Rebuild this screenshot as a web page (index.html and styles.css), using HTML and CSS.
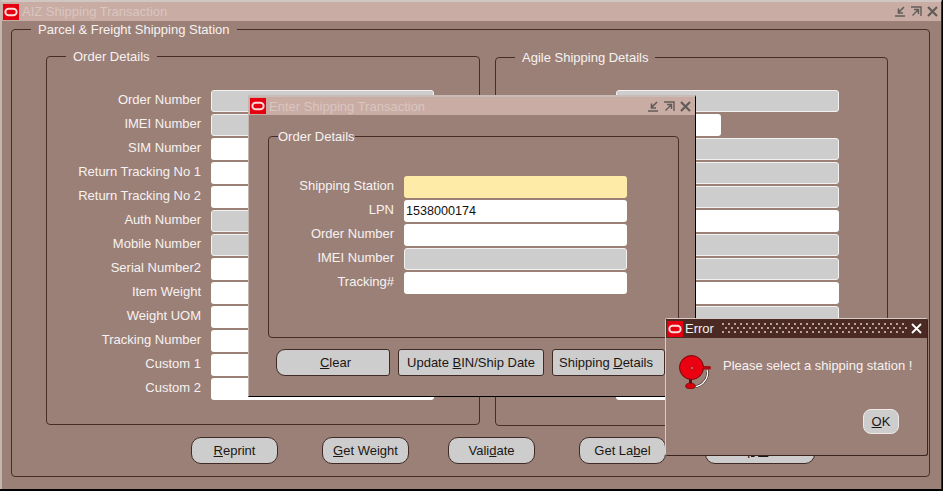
FILE: index.html
```html
<!DOCTYPE html>
<html lang="en">
<head>
<meta charset="utf-8">
<title>AIZ Shipping Transaction</title>
<link rel="stylesheet" href="styles.css">
</head>
<body>
<div class="desktop">

  <section class="window main-window">
    <header class="titlebar">
      <svg class="logo" viewBox="0 0 17 17"><rect width="17" height="17" fill="#e6000f"/><rect x="2.5" y="5" width="12" height="7" rx="3.5" fill="none" stroke="#fbdcdc" stroke-width="2"/></svg>
      <span class="title-text">AIZ Shipping Transaction</span>
      <span class="controls">
        <svg class="ctl" viewBox="0 0 11 11"><path d="M0 10H10M9 1L3.5 6.5M3.5 2.5V7H8" fill="none" stroke="#625c59" stroke-width="1.6"/></svg>
        <svg class="ctl" viewBox="0 0 11 11"><path d="M0 1H10V10M1.5 9.5L7.5 3.5M3 3.5H7.5V8" fill="none" stroke="#625c59" stroke-width="1.4"/></svg>
        <svg class="ctl" viewBox="0 0 11 11"><path d="M1 1L10 10M10 1L1 10" fill="none" stroke="#625c59" stroke-width="2.2"/></svg>
      </span>
    </header>
    <fieldset class="group outer-group">
      <legend>Parcel &amp; Freight Shipping Station</legend>
      <div class="columns">
        <fieldset class="group left-group">
          <legend>Order Details</legend>
          <div class="form left-form">
            <label>Order Number</label><div class="field ro"></div>
            <label>IMEI Number</label><div class="field ro"></div>
            <label>SIM Number</label><div class="field"></div>
            <label>Return Tracking No 1</label><div class="field"></div>
            <label>Return Tracking No 2</label><div class="field"></div>
            <label>Auth Number</label><div class="field ro"></div>
            <label>Mobile Number</label><div class="field ro"></div>
            <label>Serial Number2</label><div class="field"></div>
            <label>Item Weight</label><div class="field"></div>
            <label>Weight UOM</label><div class="field"></div>
            <label>Tracking Number</label><div class="field"></div>
            <label>Custom 1</label><div class="field"></div>
            <label>Custom 2</label><div class="field"></div>
          </div>
        </fieldset>
        <fieldset class="group right-group">
          <legend>Agile Shipping Details</legend>
          <div class="right-form">
            <div class="field ro"></div>
            <div class="field short"></div>
            <div class="field ro"></div>
            <div class="field ro"></div>
            <div class="field ro"></div>
            <div class="field"></div>
            <div class="field ro"></div>
            <div class="field ro"></div>
            <div class="field"></div>
            <div class="field ro"></div>
            <div class="field ro"></div>
            <div class="field ro"></div>
            <div class="field"></div>
          </div>
        </fieldset>
      </div>
      <div class="main-buttons">
        <button class="btn pill w87"><u>R</u>eprint</button>
        <button class="btn pill w87 tight"><u>G</u>et Weight</button>
        <button class="btn pill w87">Vali<u>d</u>ate</button>
        <button class="btn pill w87 tight">Get La<u>b</u>el</button>
        <button class="btn pill w110">Shi<u>p</u> <u>O</u>rder</button>
      </div>
    </fieldset>
  </section>

  <section class="window dialog">
    <header class="titlebar">
      <svg class="logo" viewBox="0 0 17 17"><rect width="17" height="17" fill="#e6000f"/><rect x="2.5" y="5" width="12" height="7" rx="3.5" fill="none" stroke="#fbdcdc" stroke-width="2"/></svg>
      <span class="title-text">Enter Shipping Transaction</span>
      <span class="controls dialog-controls">
        <svg class="ctl" viewBox="0 0 11 11"><path d="M0 10H10M9 1L3.5 6.5M3.5 2.5V7H8" fill="none" stroke="#625c59" stroke-width="1.6"/></svg>
        <svg class="ctl" viewBox="0 0 11 11"><path d="M0 1H10V10M1.5 9.5L7.5 3.5M3 3.5H7.5V8" fill="none" stroke="#625c59" stroke-width="1.4"/></svg>
        <svg class="ctl" viewBox="0 0 11 11"><path d="M1 1L10 10M10 1L1 10" fill="none" stroke="#625c59" stroke-width="2.2"/></svg>
      </span>
    </header>
    <fieldset class="group dialog-group">
      <legend>Order Details</legend>
      <div class="form dialog-form">
        <label>Shipping Station</label><div class="field required"></div>
        <label>LPN</label><div class="field">1538000174</div>
        <label>Order Number</label><div class="field"></div>
        <label>IMEI Number</label><div class="field ro"></div>
        <label>Tracking#</label><div class="field"></div>
      </div>
    </fieldset>
    <div class="dialog-buttons">
      <button class="btn half-round clear"><u>C</u>lear</button>
      <button class="btn square update">Update <u>B</u>IN/Ship Date</button>
      <button class="btn square details">Shipping <u>D</u>etails</button>
    </div>
  </section>

  <section class="window error">
    <header class="error-bar">
      <svg class="logo" viewBox="0 0 17 17"><rect width="17" height="17" fill="#e6000f"/><rect x="2.5" y="5" width="12" height="7" rx="3.5" fill="none" stroke="#fbdcdc" stroke-width="2"/></svg>
      <span class="error-title">Error</span>
      <span class="dots"></span>
      <svg class="error-close" viewBox="0 0 11 11"><path d="M1 1L10 10M10 1L1 10" fill="none" stroke="#fff" stroke-width="1.8"/></svg>
    </header>
    <div class="error-body">
      <svg class="bell" viewBox="0 0 34 34">
        <path d="M28 15C30 21 26 31 14 32" fill="none" stroke="#3a2420" stroke-width="2.6"/>
        <path d="M28 15C30 21 26 31 14 32" fill="none" stroke="#fff" stroke-width="1.4"/>
        <path d="M11.500 23V29" stroke="#6b0a0a" stroke-width="3"/>
        <rect x="23" y="11" width="9" height="3.500" rx="1.500" fill="#a80f12"/>
        <ellipse cx="11.500" cy="31" rx="5" ry="3" fill="#d9000c" stroke="#5a0c0c" stroke-width=".7"/>
        <circle cx="12.500" cy="12.500" r="12" fill="#ea0010" stroke="#700a0c" stroke-width="1"/>
        <circle cx="13" cy="13" r="1.300" fill="#f7a090" stroke="#8a0a0c" stroke-width=".7"/>
      </svg>
      <p class="error-msg">Please select a shipping station !</p>
    </div>
    <div class="error-actions">
      <button class="btn ok"><u>O</u>K</button>
    </div>
  </section>

</div>
</body>
</html>
```

FILE: styles.css
```css
* { box-sizing: border-box; }

html, body {
  margin: 0;
  padding: 0;
  background: #000;
}

body {
  width: 943px;
  height: 491px;
  overflow: hidden;
  font-family: "Liberation Sans", Arial, sans-serif;
  font-size: 13px;
  color: #f7f2f0;
}

.desktop {
  position: relative;
  width: 943px;
  height: 491px;
}

.window {
  position: absolute;
  display: flex;
  flex-direction: column;
  background: #9b8078;
}

.main-window {
  left: 0;
  top: 0;
  width: 942px;
  height: 489px;
  border-top: 2px solid #d0c6c2;
  border-left: 2px solid #c6b5af;
  border-right: 1px solid #3a2a26;
}

.dialog {
  left: 248px;
  top: 95px;
  width: 448px;
  height: 302px;
  border-top: 2px solid #c9bcb7;
  border-left: 1px solid #c6b5af;
  border-right: 1px solid #000;
  border-bottom: 1px solid #000;
}

.error {
  left: 665px;
  top: 318px;
  width: 263px;
  height: 138px;
  border: 1px solid #3a2420;
  border-top-color: #d8ccc8;
  border-left-color: #d8ccc8;
  border-radius: 3px;
}

.titlebar {
  display: flex;
  align-items: center;
  flex: none;
  height: 19px;
  background: #c9aca4;
  padding-left: 1px;
}

.dialog .titlebar {
  height: 18px;
}

.logo {
  flex: none;
  width: 16px;
  height: 16px;
}

.title-text {
  margin-left: 3px;
  font-size: 13px;
  color: #d9c6c0;
}

.controls {
  display: flex;
  align-items: center;
  gap: 5px;
  margin-left: auto;
  padding-right: 3px;
}

.dialog-controls {
  padding-right: 4px;
}

.ctl {
  display: block;
  width: 11px;
  height: 11px;
}

.group {
  margin: 0;
  padding: 0;
  min-width: 0;
  border: 1px solid #4a2b26;
  border-radius: 4px;
}

.group > legend {
  padding: 0 7px;
  line-height: 17px;
  font-size: 13px;
}

.outer-group {
  width: 919px;
  height: 456px;
  margin: 0 0 0 9px;
  padding: 10px 0 0 0;
}

.outer-group > legend {
  margin-left: 19px;
}

.columns {
  display: flex;
  align-items: flex-start;
  gap: 15px;
  margin-left: 34px;
}

.left-group {
  width: 434px;
  height: 377px;
}

.right-group {
  width: 393px;
  height: 377px;
  margin-top: 1px;
}

.left-group > legend,
.right-group > legend {
  margin-left: 19px;
}

.form {
  display: grid;
  grid-auto-rows: 22px;
  row-gap: 2px;
  column-gap: 10px;
  align-items: center;
}

.left-form {
  grid-template-columns: 154px 223px;
  margin-top: 25px;
}

.right-form {
  display: grid;
  grid-template-columns: 223px;
  grid-auto-rows: 22px;
  row-gap: 2px;
  margin: 24px 0 0 120px;
}

.form label {
  font-size: 13px;
  text-align: right;
  line-height: 17px;
  margin-top: -4px;
}

.field {
  height: 22px;
  line-height: 22px;
  padding-left: 2px;
  font-size: 12.6px;
  color: #14100f;
  background: #fff;
  border-radius: 3px;
}

.field.ro {
  background: #cdcdcd;
  border: 1px solid #f4f2f1;
}

.field.required {
  background: #feeba8;
}

.field.short {
  width: 105px;
}

.btn {
  display: block;
  height: 27px;
  padding: 0;
  font-family: inherit;
  font-size: 13px;
  color: #1c1614;
  background: #cdcdcd;
  border: 1px solid #3f2a25;
}

.main-buttons {
  display: flex;
  margin: 11px 0 0 179px;
}

.pill {
  border-radius: 10px;
}

.w87 {
  width: 87px;
  margin-right: 44px;
}

.w87.tight {
  margin-right: 39px;
}

.w110 {
  width: 110px;
}

.dialog-group {
  width: 411px;
  height: 210px;
  margin: 13px 0 0 19px;
  padding: 0;
}

.dialog-group > legend {
  margin-left: 9px;
  padding: 0;
}

.dialog-form {
  grid-template-columns: 125px 223px;
  margin-top: 31px;
}

.dialog-buttons {
  display: flex;
  gap: 8px;
  margin: 11px 0 0 27px;
}

.half-round {
  border-radius: 9px 3px 3px 9px;
}

.square {
  border-radius: 3px;
}

.clear {
  width: 114px;
  padding-left: 5px;
}

.update {
  width: 146px;
}

.details {
  width: 113px;
  padding-right: 5px;
}

.error-bar {
  display: flex;
  align-items: center;
  flex: none;
  height: 19px;
  padding-left: 1px;
  background: #4a2a22;
}

.error-title {
  margin-left: 2px;
  font-size: 13px;
  color: #f7f2f0;
}

.dots {
  flex: none;
  width: 185px;
  height: 11px;
  margin-left: 8px;
  background-image:
    radial-gradient(circle at 1px 1px, #b8a49c 0.9px, transparent 1.1px),
    radial-gradient(circle at 1px 1px, #b8a49c 0.9px, transparent 1.1px);
  background-size: 6px 8px;
  background-position: 0 0, 3px 4px;
}

.error-close {
  display: block;
  flex: none;
  width: 11px;
  height: 11px;
  margin-left: 4px;
}

.error-body {
  display: flex;
  align-items: flex-start;
  padding: 17px 0 0 13px;
}

.bell {
  flex: none;
  width: 34px;
  height: 34px;
}

.error-msg {
  margin: 2px 0 0 10px;
  line-height: 17px;
  font-size: 13px;
}

.error-actions {
  display: flex;
  justify-content: flex-end;
  margin-top: 20px;
  padding-right: 28px;
}

.btn.ok {
  width: 36px;
  height: 25px;
  border-color: #efe9e6;
  border-radius: 8px;
}
```
